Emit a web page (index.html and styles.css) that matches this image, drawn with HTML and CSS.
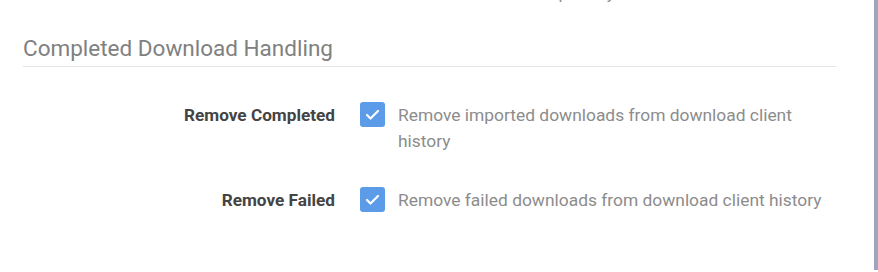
FILE: index.html
```html
<!DOCTYPE html>
<html lang="en">
<head>
    <meta charset="UTF-8">
    <meta name="viewport" content="width=device-width, initial-scale=1.0">
    <title>Download Clients</title>
    <link rel="stylesheet" href="styles.css">
</head>
<body>
    <div class="page">
        <div class="content">
            <div class="prev">
                <p class="help">Items are ordered to post by name</p>
            </div>

            <div class="section">
                <div class="legend">Completed Download Handling</div>

                <div class="rows">
                    <div class="row">
                        <div class="label">Remove Completed</div>
                        <span class="check">
                            <svg width="25" height="25" viewBox="0 0 25 25"><polyline points="7,13 10.5,16.5 18,9" fill="none" stroke="#fff" stroke-width="2.2" stroke-linecap="round" stroke-linejoin="round"/></svg>
                        </span>
                        <div class="desc">Remove imported downloads from download client history</div>
                    </div>

                    <div class="row">
                        <div class="label">Remove Failed</div>
                        <span class="check">
                            <svg width="25" height="25" viewBox="0 0 25 25"><polyline points="7,13 10.5,16.5 18,9" fill="none" stroke="#fff" stroke-width="2.2" stroke-linecap="round" stroke-linejoin="round"/></svg>
                        </span>
                        <div class="desc">Remove failed downloads from download client history</div>
                    </div>
                </div>
            </div>
        </div>
        <div class="scroll"></div>
    </div>
</body>
</html>
```

FILE: styles.css
```css
* {
    padding: 0;
    margin: 0;
    box-sizing: border-box;
}
body {
    background: #fff;
    font-family: Roboto, "Liberation Sans", sans-serif;
    overflow: hidden;
}
.page {
    display: flex;
    height: 272px;
}
.content {
    flex: 1;
    padding: 0 38px 0 23px;
}
.scroll {
    width: 4px;
    height: 270px;
    background: #a0a5bd;
}

.prev {
    margin-top: -20px;
    height: 26px;
}
.prev .help {
    margin-left: 375px;
    font-size: 17.4px;
    line-height: 26px;
    white-space: nowrap;
    color: #909090;
}

.legend {
    margin-top: 27px;
    padding-bottom: 3px;
    border-bottom: 1px solid #e5e5e5;
    font-size: 22.5px;
    line-height: 30px;
    color: #808080;
}

.rows {
    padding-top: 35px;
}
.row {
    display: flex;
    align-items: flex-start;
}
.row + .row {
    margin-top: 33px;
}
.row .label {
    flex: none;
    width: 312px;
    text-align: right;
    font-size: 17.2px;
    font-weight: bold;
    line-height: 26px;
    color: #444;
}
.row .check {
    flex: none;
    width: 25px;
    height: 25px;
    margin-left: 25px;
    border-radius: 3px;
    background: #5b9be8;
}
.row .check svg {
    display: block;
}
.row .desc {
    flex: 1;
    margin-left: 13px;
    font-size: 17.4px;
    line-height: 26px;
    color: #8c8c8c;
}
```
